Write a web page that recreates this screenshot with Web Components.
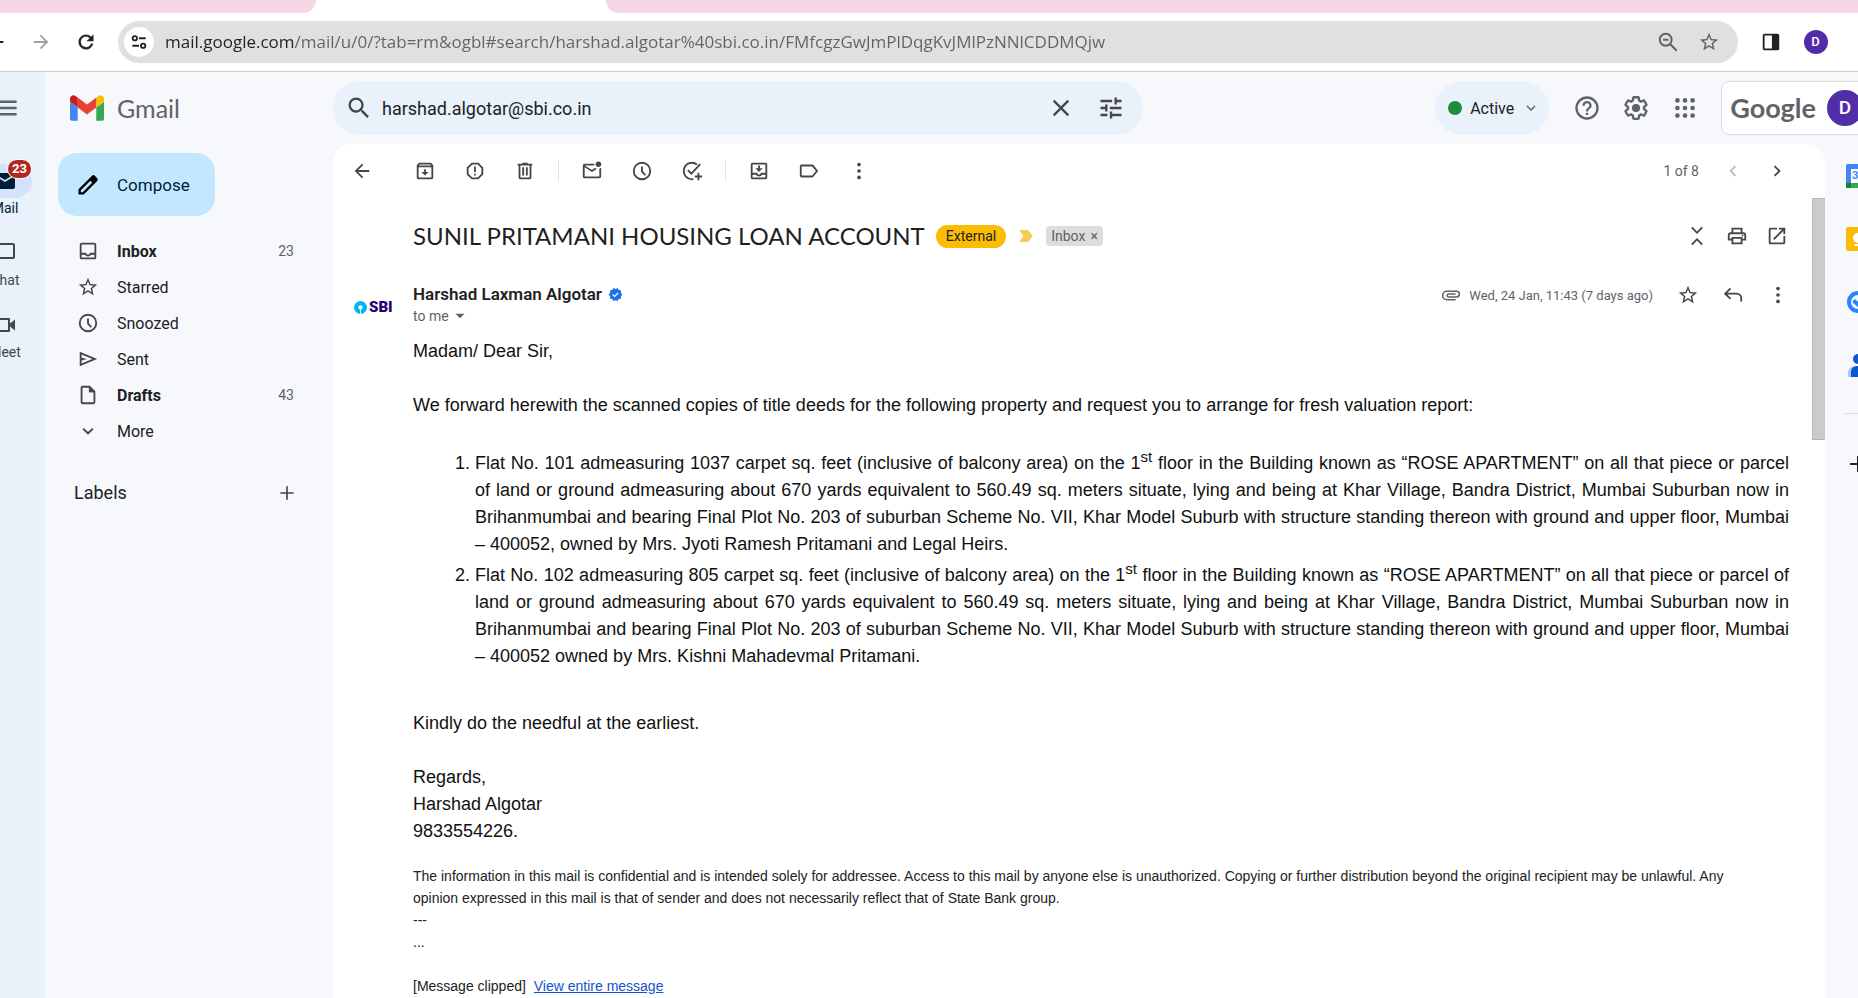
<!DOCTYPE html>
<html lang="en">
<head>
<meta charset="utf-8">
<title>SUNIL PRITAMANI HOUSING LOAN ACCOUNT - Gmail</title>
<style>
  body {
    margin: 0;
    height: 100vh;
    overflow: hidden;
    display: flex;
    flex-direction: column;
    background: #f6f8fc;
    color: #202124;
    font-family: Roboto, "Liberation Sans", sans-serif;
    font-size: 16px;
  }
</style>
</head>
<body>
<browser-bar></browser-bar>
<mail-app>
  <app-rail slot="rail"></app-rail>
  <mail-header slot="header"></mail-header>
  <side-nav slot="nav"></side-nav>
  <mail-thread slot="thread" heading="SUNIL PRITAMANI HOUSING LOAN ACCOUNT">
    <mail-message sender="Harshad Laxman Algotar" date="Wed, 24 Jan, 11:43 (7 days ago)"></mail-message>
  </mail-thread>
  <side-panel slot="panel"></side-panel>
</mail-app>

<script>
const ICONS = {
  back: '<path d="M20 11H7.8l5.6-5.6L12 4l-8 8 8 8 1.4-1.4L7.8 13H20z"/>',
  forward: '<path d="M4 13h12.2l-5.6 5.6L12 20l8-8-8-8-1.4 1.4 5.6 5.6H4z"/>',
  reload: '<path d="M17.65 6.35A7.96 7.96 0 0 0 12 4a8 8 0 1 0 7.73 10h-2.3A5.8 5.8 0 1 1 12 6.1c1.63 0 3.1.7 4.15 1.75L12.9 11H20V4z" stroke="currentColor" stroke-width=".4"/>',
  site: '<g fill="none" stroke="currentColor" stroke-width="2.2"><circle cx="7" cy="7.5" r="2.6"/><circle cx="17" cy="16.5" r="2.6"/><path d="M12 7.5h8M4 16.5h8"/></g>',
  zoomOut: '<g fill="none" stroke="currentColor" stroke-width="2.2"><circle cx="9.5" cy="9.5" r="6.5"/><path d="M14 14l7.5 7.5M6.500 9.500h6"/></g>',
  star: '<path d="M22 9.24l-7.19-.62L12 2 9.19 8.63 2 9.24l5.46 4.73L5.82 21 12 17.27 18.18 21l-1.63-7.03zM12 15.4l-3.76 2.27 1-4.28-3.32-2.88 4.38-.38L12 6.1l1.71 4.04 4.38.38-3.32 2.88 1 4.28z"/>',
  panel: '<path d="M19 3H5a2 2 0 0 0-2 2v14c0 1.1.9 2 2 2h14a2 2 0 0 0 2-2V5a2 2 0 0 0-2-2zM5 19V5h8v14z"/>',
  menu: '<path d="M2 18.5h20v-2.2H2zm0-5.4h20v-2.2H2zM2 5.5v2.2h20V5.500z"/>',
  mailFill: '<path d="M20 4H4a2 2 0 0 0-2 2v12c0 1.1.9 2 2 2h16a2 2 0 0 0 2-2V6a2 2 0 0 0-2-2zm0 4l-8 5-8-5V6l8 5 8-5z"/>',
  chat: '<path d="M20 2H4a2 2 0 0 0-2 2v18l4-4h14a2 2 0 0 0 2-2V4a2 2 0 0 0-2-2zm0 14H5.17L4 17.17V4h16z"/>',
  meet: '<path d="M17 10.5V6a1 1 0 0 0-1-1H6L2 9v9a1 1 0 0 0 1 1h13a1 1 0 0 0 1-1v-4.5l5 4v-11zM15 17H4V9.800L6.800 7H15z"/>',
  search: '<path d="M15.5 14h-.79l-.28-.27A6.47 6.47 0 0 0 16 9.5 6.5 6.5 0 1 0 9.5 16c1.61 0 3.09-.59 4.23-1.57l.27.28v.79l5 4.99L20.49 19zm-6 0a4.5 4.5 0 1 1 0-9 4.5 4.5 0 0 1 0 9z"/>',
  close: '<path d="M19 6.41L17.59 5 12 10.59 6.41 5 5 6.41 10.59 12 5 17.59 6.41 19 12 13.41 17.59 19 19 17.59 13.41 12z"/>',
  tune: '<path d="M3 17v2h6v-2zM3 5v2h10V5zm10 16v-2h8v-2h-8v-2h-2v6zM7 9v2H3v2h4v2h2V9zm14 4v-2H11v2zm-6-4h2V7h4V5h-4V3h-2z"/>',
  down: '<path d="M7.4 8.6L12 13.2l4.6-4.6L18 10l-6 6-6-6z"/>',
  help: '<path d="M11 18h2v-2h-2zm1-16a10 10 0 1 0 0 20 10 10 0 0 0 0-20zm0 18a8 8 0 1 1 0-16 8 8 0 0 1 0 16zm0-14a4 4 0 0 0-4 4h2a2 2 0 1 1 4 0c0 2-3 1.75-3 5h2c0-2.25 3-2.5 3-5a4 4 0 0 0-4-4z"/>',
  gear: '<path d="M13.85 22.25h-3.7c-.74 0-1.36-.54-1.45-1.27l-.27-1.89c-.27-.14-.53-.29-.79-.46l-1.8.72c-.7.26-1.47-.03-1.81-.65L2.2 15.53c-.35-.66-.2-1.44.36-1.88l1.53-1.19c-.01-.15-.02-.3-.02-.46 0-.15.01-.31.02-.46l-1.52-1.19c-.59-.45-.74-1.26-.37-1.88l1.85-3.19c.34-.62 1.11-.9 1.79-.63l1.81.73c.26-.17.52-.32.78-.46l.27-1.91c.09-.7.71-1.25 1.44-1.25h3.7c.74 0 1.36.54 1.45 1.27l.27 1.89c.27.14.53.29.79.46l1.8-.72c.71-.26 1.48.03 1.82.65l1.84 3.18c.36.66.2 1.44-.36 1.88l-1.52 1.19c.01.15.02.3.02.46s-.01.31-.02.46l1.52 1.19c.56.45.72 1.23.37 1.86l-1.86 3.22c-.34.62-1.11.9-1.8.63l-1.8-.72c-.26.17-.52.32-.78.46l-.27 1.91c-.1.68-.72 1.22-1.46 1.22zm-3.23-2h2.76l.37-2.55.53-.22c.44-.18.88-.44 1.34-.78l.45-.34 2.38.96 1.38-2.4-2.03-1.58.07-.56c.03-.26.06-.51.06-.78s-.03-.53-.06-.78l-.07-.56 2.03-1.58-1.39-2.4-2.39.96-.45-.35c-.42-.32-.87-.58-1.33-.77l-.52-.22-.37-2.55h-2.76l-.37 2.55-.53.21c-.44.19-.88.44-1.34.79l-.45.33-2.38-.95-1.39 2.39 2.03 1.58-.07.56a7 7 0 0 0-.06.79c0 .26.02.53.06.78l.07.56-2.03 1.58 1.38 2.4 2.39-.96.45.35c.43.33.86.58 1.33.77l.53.22z"/><circle cx="12" cy="12" r="3.5"/>',
  apps: '<circle cx="5.5" cy="5.5" r="2"/><circle cx="12" cy="5.5" r="2"/><circle cx="18.5" cy="5.5" r="2"/><circle cx="5.5" cy="12" r="2"/><circle cx="12" cy="12" r="2"/><circle cx="18.5" cy="12" r="2"/><circle cx="5.5" cy="18.5" r="2"/><circle cx="12" cy="18.5" r="2"/><circle cx="18.5" cy="18.5" r="2"/>',
  pencil: '<path d="M21.2 5.2l-2.400-2.400a2 2 0 0 0-2.800 0L2.500 16.300v5.200h5.200L21.200 8a2 2 0 0 0 0-2.800zM6.700 19.200H4.800v-1.900l9.500-9.500 1.900 1.900z"/>',
  inbox: '<path d="M19 3H5a2 2 0 0 0-2 2v14c0 1.1.9 2 2 2h14a2 2 0 0 0 2-2V5a2 2 0 0 0-2-2zm0 16H5v-3h3.56a4 4 0 0 0 6.88 0H19zm0-5h-4.99a2 2 0 0 1-4.02 0H5V5h14z"/>',
  clock: '<path d="M12 2a10 10 0 1 0 0 20 10 10 0 0 0 0-20zm0 18a8 8 0 1 1 0-16 8 8 0 0 1 0 16zm1-13h-2v6l4 4.2 1.4-1.4-3.400-3.400z"/>',
  send: '<path d="M3 4v16l19-8zm2 3l11.85 5L5 17v-3.5l6-1.5-6-1.5z"/>',
  draft: '<path d="M14 2H6a2 2 0 0 0-2 2v16c0 1.1.9 2 2 2h12a2 2 0 0 0 2-2V8zM6 20V4h7v5h5v11z"/><path d="M13 3v6h6z"/>',
  plus: '<path d="M20 13h-7v7h-2v-7H4v-2h7V4h2v7h7z"/>',
  archive: '<path d="M20.54 5.23l-1.39-1.68A1.45 1.45 0 0 0 18 3H6c-.47 0-.88.21-1.16.55L3.46 5.23A1.98 1.98 0 0 0 3 6.5V19c0 1.1.9 2 2 2h14a2 2 0 0 0 2-2V6.500c0-.48-.17-.93-.46-1.27zM6.24 5h11.52l.83 1H5.42zM5 19V8h14v11zm8-9h-2v3H8l4 4 4-4h-3z"/>',
  spam: '<path d="M15.73 3H8.27L3 8.27v7.46L8.27 21h7.46L21 15.73V8.27zM19 14.9L14.9 19H9.1L5 14.9V9.1L9.1 5h5.8L19 9.100z"/><path d="M11 7h2v6h-2zM11 15h2v2h-2z"/>',
  trash: '<path d="M15 4V3H9v1H4v2h1v13c0 1.1.9 2 2 2h10a2 2 0 0 0 2-2V6h1V4zm2 15H7V6h10z"/><path d="M9 8h2v9H9zM13 8h2v9h-2z"/>',
  unread: '<path d="M20 9.5V18H4V8l8 5 5.2-3.2a4.500 4.500 0 0 1-1.700-1.300L12 11 4 6h10.500c-.1-.7 0-1.400.2-2H4a2 2 0 0 0-2 2v12c0 1.100.9 2 2 2h16a2 2 0 0 0 2-2V8.500z"/><circle cx="19" cy="4.500" r="3"/>',
  task: '<path d="M20.200 9.400l1.600-1.600A10 10 0 1 0 14 21.800v-2.100A8 8 0 1 1 12 4c1.600 0 3.100.5 4.300 1.300L10.600 11.200 8.400 9 7 10.400l3.600 3.600L22 4.500 20.600 3.100z" fill="none"/><path fill="none" stroke="currentColor" stroke-width="2" d="M17.500 4.900A9 9 0 1 0 13.500 20.900M7.500 11l3.800 3.800L21 4.500"/><path d="M20 14h-2v3h-3v2h3v3h2v-3h3v-2h-3z"/>',
  moveTo: '<path d="M19 3H5a2 2 0 0 0-2 2v14c0 1.1.9 2 2 2h14a2 2 0 0 0 2-2V5a2 2 0 0 0-2-2zM5 19v-3h3.56a4 4 0 0 0 6.88 0H19v3zm0-5V5h14v9h-5a2 2 0 0 1-4 0z"/><path d="M16 9h-3V6h-2v3H8l4 4z"/>',
  label: '<path d="M17 5.5A2 2 0 0 0 15.5 5H4a2 2 0 0 0-2 2v10c0 1.1.9 2 2 2h11.5c.7 0 1.2-.3 1.6-.9L22 12zM15.5 17H4V7h11.5l4 5z"/>',
  more: '<circle cx="12" cy="5" r="2"/><circle cx="12" cy="12" r="2"/><circle cx="12" cy="19" r="2"/>',
  left: '<path d="M15.4 7.4L14 6l-6 6 6 6 1.4-1.4L10.8 12z"/>',
  right: '<path d="M8.6 16.6L10 18l6-6-6-6-1.4 1.4 4.6 4.6z"/>',
  collapse: '<path d="M18.5 3.4L17 2l-5 5-5-5-1.5 1.4L12 9.9zM5.500 20.600L7 22l5-5 5 5 1.500-1.400-6.500-6.500z"/>',
  print: '<path d="M19 8h-1V3H6v5H5a3 3 0 0 0-3 3v6h4v4h12v-4h4v-6a3 3 0 0 0-3-3zM8 5h8v3H8zm8 14H8v-4h8zm2-4v-2H6v2H4v-4a1 1 0 0 1 1-1h14a1 1 0 0 1 1 1v4z"/><circle cx="18" cy="11.5" r="1"/>',
  open: '<path d="M19 19H5V5h7V3H5a2 2 0 0 0-2 2v14c0 1.1.9 2 2 2h14a2 2 0 0 0 2-2v-7h-2zM14 3v2h3.59l-9.83 9.83 1.41 1.41L19 6.41V10h2V3z"/>',
  reply: '<path d="M10 5.4L8.6 4 2 10.5 8.600 17l1.400-1.400-4.200-4.100H16a4 4 0 0 1 4 4V19h2v-3.500a6 6 0 0 0-6-6H5.800z"/>',
  clip: '<path d="M7.5 18a5.5 5.5 0 0 1 0-11H18a4 4 0 0 1 0 8H9.5a2.5 2.5 0 0 1 0-5H17v1.7H9.5a.8.8 0 0 0 0 1.600H18a2.300 2.300 0 0 0 0-4.600H7.500a3.800 3.800 0 0 0 0 7.600H17V18z"/>',
  arrow: '<path d="M6 9l6 6 6-6z"/>',
  verified: '<path fill="#1a73e8" d="M23 12l-2.44-2.78.34-3.68-3.61-.82L15.4 1.54 12 3 8.6 1.54 6.71 4.72l-3.61.81.34 3.68L1 12l2.44 2.78-.34 3.69 3.61.82 1.89 3.18L12 21l3.4 1.46 1.89-3.18 3.61-.82-.34-3.68z"/><path fill="none" stroke="#fff" stroke-width="2" d="M7.5 12l3.2 3 5.5-5.5"/>',
  important: '<path fill="#f7cb4d" d="M3 4h11.500l6.500 8-6.500 8H3l5.500-8z"/>',
  sbi: '<circle cx="12" cy="12" r="12" fill="#00b5ef"/><circle cx="12" cy="12" r="4" fill="#fff"/><path fill="#fff" d="M11 12h2v12h-2z"/>',
  calendar: '<path fill="#4285f4" d="M0 2a2 2 0 0 1 2-2h22v5H5v19H0z"/><path fill="#fff" d="M5 5h19v14H5z"/><path fill="#34a853" d="M5 19h19v5H5z"/><path fill="#188038" d="M0 19h5v5H2a2 2 0 0 1-2-2z"/>',
  keep: '<rect width="24" height="24" rx="2" fill="#fbbc04"/><circle cx="12" cy="11" r="5" fill="#fff"/><path fill="#fff" d="M8.5 17h7v2h-7z"/>',
  tasks: '<circle cx="12" cy="12" r="9" fill="none" stroke="#2684fc" stroke-width="4"/><path fill="none" stroke="#2684fc" stroke-width="4" d="M7.500 10.500l4.500 4L22 4"/>',
  contacts: '<circle cx="12" cy="6" r="5" fill="#0b57d0"/><path fill="#a8c7fa" d="M2 24v-4c0-4 3-7 7-7h2v11z"/><path fill="#0b57d0" d="M5 24v-5c0-4 3-6 7-6s7 2 7 6v5z"/>'
};

// Base class: each element renders its own markup into an open shadow root.
class BaseElement extends HTMLElement {
  connectedCallback() {
    if (this.shadowRoot) return;
    this.attachShadow({ mode: "open" });
    this.shadowRoot.innerHTML = `
      <style>
        * { box-sizing: border-box; }
        button, input {
          margin: 0;
          padding: 0;
          border: none;
          background: none;
          color: inherit;
          font: inherit;
        }
        button { cursor: pointer; }
        :host { display: block; }
      </style>
      ${this.render()}
    `;
  }
}

class MailIcon extends BaseElement {
  render() {
    return `
      <style>
        :host {
          display: inline-flex;
          flex: none;
          width: var(--icon-size, 22px);
          height: var(--icon-size, 22px);
        }
        svg { width: 100%; height: 100%; display: block; }
      </style>
      <svg viewBox="0 0 24 24" fill="currentColor" aria-hidden="true">${ICONS[this.getAttribute("name")]}</svg>
    `;
  }
}

class IconButton extends BaseElement {
  render() {
    const name = this.getAttribute("icon");
    return `
      <style>
        :host {
          flex: none;
          width: var(--button-width, 40px);
          height: 40px;
        }
        button {
          width: 100%;
          height: 100%;
          display: flex;
          align-items: center;
          justify-content: center;
        }
      </style>
      <button type="button" aria-label="${this.getAttribute("label")}"><mail-icon name="${name}"></mail-icon></button>
    `;
  }
}

class UserAvatar extends BaseElement {
  render() {
    return `
      <style>
        :host {
          flex: none;
          width: var(--avatar-size, 24px);
          height: var(--avatar-size, 24px);
        }
        button {
          width: 100%;
          height: 100%;
          border-radius: 50%;
          background: #512da8;
          color: #fff;
          text-align: center;
        }
      </style>
      <button type="button"><slot></slot></button>
    `;
  }
}

class BrowserBar extends BaseElement {
  render() {
    return `
      <style>
        :host { flex: none; background: #fff; border-bottom: 1px solid #c9cccb; overflow: hidden; }
        .tabs { height: 13px; display: flex; justify-content: space-between; }
        .tab { background: #f6d5e4; }
        .tab.before { width: 17%; border-bottom-right-radius: 13px; }
        .tab.after { width: 67.4%; border-bottom-left-radius: 13px; }
        .bar { height: 58px; display: flex; align-items: center; padding-right: 20px; margin-left: -27px; }
        .nav { --button-width: 45px; --icon-size: 22px; color: #202124; }
        .nav.off { color: #a0a0a0; }
        .omnibox {
          flex: 1;
          min-width: 0;
          height: 42px;
          margin: 0 10px;
          padding: 0 9px 0 6px;
          border-radius: 21px;
          background: #e0e0e0;
          display: flex;
          align-items: center;
          color: #5f6368;
          --button-width: 41px;
        }
        .site {
          width: 30px;
          height: 30px;
          border-radius: 50%;
          background: #fff;
          color: #202124;
          display: flex;
          align-items: center;
          justify-content: center;
          --icon-size: 20px;
        }
        input {
          flex: 1;
          min-width: 0;
          height: 30px;
          margin-left: 11px;
          font: 17px/30px "Open Sans", sans-serif;
          outline: none;
          color: transparent;
          background: linear-gradient(90deg, #202124 129px, #5f6368 129px);
          -webkit-background-clip: text;
          background-clip: text;
        }
        .user { width: 45px; display: flex; justify-content: center; font: 500 13px/24px Roboto, sans-serif; }
      </style>
      <div class="tabs"><div class="tab before"></div><div class="tab after"></div></div>
      <div class="bar">
        <icon-button class="nav" icon="back" label="Back"></icon-button>
        <icon-button class="nav off" icon="forward" label="Forward"></icon-button>
        <icon-button class="nav" icon="reload" label="Reload"></icon-button>
        <div class="omnibox">
          <button type="button" class="site" aria-label="Site information"><mail-icon name="site"></mail-icon></button>
          <input type="text" aria-label="Address" value="mail.google.com/mail/u/0/?tab=rm&amp;ogbl#search/harshad.algotar%40sbi.co.in/FMfcgzGwJmPlDqgKvJMlPzNNlCDDMQjw">
          <icon-button icon="zoomOut" label="Zoom"></icon-button>
          <icon-button icon="star" label="Bookmark"></icon-button>
        </div>
        <icon-button class="nav" icon="panel" label="Side panel"></icon-button>
        <div class="user"><user-avatar>D</user-avatar></div>
      </div>
    `;
  }
}

class MailApp extends BaseElement {
  render() {
    return `
      <style>
        :host { flex: 1; min-height: 0; display: flex; }
        .main { flex: 1; min-width: 0; display: flex; flex-direction: column; overflow: hidden; }
        .content { flex: 1; min-height: 0; display: flex; }
        slot[name="thread"]::slotted(*) { flex: 1; min-width: 0; }
      </style>
      <slot name="rail"></slot>
      <div class="main">
        <slot name="header"></slot>
        <div class="content">
          <slot name="nav"></slot>
          <slot name="thread"></slot>
          <slot name="panel"></slot>
        </div>
      </div>
    `;
  }
}

class AppRail extends BaseElement {
  render() {
    return `
      <style>
        :host {
          flex: none;
          width: 45px;
          display: flex;
          justify-content: flex-end;
          overflow: hidden;
          background: #e9f1fb;
          color: #444746;
        }
        nav { flex: none; width: 80px; display: flex; flex-direction: column; align-items: center; }
        .menu { height: 72px; display: flex; align-items: center; margin-bottom: 20px; --icon-size: 28px; color: #5f6368; }
        a {
          height: 72px;
          display: flex;
          flex-direction: column;
          align-items: center;
          color: inherit;
          text-decoration: none;
          font-size: 14px;
          line-height: 20px;
          --icon-size: 24px;
        }
        .pill {
          position: relative;
          width: 54px;
          height: 34px;
          border-radius: 17px;
          display: flex;
          align-items: center;
          justify-content: center;
        }
        .active { color: #001d35; }
        .active .pill { background: #d3e3fd; }
        .badge {
          position: absolute;
          top: -5px;
          right: 0;
          padding: 0 4px;
          border: 1px solid #fff;
          border-radius: 10px;
          background: #b3261e;
          color: #fff;
          font-size: 13px;
          font-weight: 700;
          line-height: 18px;
        }
      </style>
      <nav>
        <div class="menu"><icon-button icon="menu" label="Main menu"></icon-button></div>
        <a href="#mail" class="active"><span class="pill"><mail-icon name="mailFill"></mail-icon><span class="badge">23</span></span>Mail</a>
        <a href="#chat"><span class="pill"><mail-icon name="chat"></mail-icon></span>Chat</a>
        <a href="#meet"><span class="pill"><mail-icon name="meet"></mail-icon></span>Meet</a>
      </nav>
    `;
  }
}

class MailHeader extends BaseElement {
  render() {
    return `
      <style>
        :host { flex: none; height: 72px; display: flex; align-items: center; color: #5f6368; --icon-size: 28px; }
        .logo {
          flex: none;
          width: 288px;
          padding-left: 25px;
          display: flex;
          align-items: center;
          gap: 13px;
          color: #5f6368;
          font: 25px/32px Lato, sans-serif;
          text-decoration: none;
        }
        .logo svg { width: 34px; height: 26px; }
        form {
          flex: 0 1 810px;
          min-width: 0;
          height: 54px;
          padding: 0 7px 0 2px;
          border-radius: 27px;
          background: #e9f1fb;
          display: flex;
          align-items: center;
          color: #444746;
          --button-width: 50px;
        }
        .find { --button-width: 47px; }
        input { flex: 1; min-width: 0; color: #202124; font-size: 18px; outline: none; }
        .right { flex: none; display: flex; align-items: center; margin-left: auto; margin-right: -14px; }
        .status {
          height: 54px;
          padding: 0 9px 0 13px;
          border-radius: 27px;
          background: #e9f1fb;
          display: flex;
          align-items: center;
          gap: 8px;
          color: #202124;
          --icon-size: 18px;
        }
        .status mail-icon { color: #5f6368; }
        .dot { width: 14px; height: 14px; border-radius: 50%; background: #1e8e3e; }
        .icons { display: flex; margin: 0 12px 0 13px; --button-width: 49px; }
        .account {
          height: 54px;
          padding: 0 8px;
          border: 1px solid #dadce0;
          border-radius: 8px;
          background: #fff;
          display: flex;
          align-items: center;
          gap: 11px;
          font: 700 27px/36px Lato, sans-serif;
          --avatar-size: 36px;
        }
        user-avatar { font: 500 19px/36px Roboto, sans-serif; }
      </style>
      <a class="logo" href="#inbox">
        <svg viewBox="52 42 88 66" aria-hidden="true">
          <path fill="#4285f4" d="M58 108h14V74L52 59v43c0 3.32 2.69 6 6 6"/>
          <path fill="#34a853" d="M120 108h14c3.32 0 6-2.69 6-6V59l-20 15"/>
          <path fill="#fbbc04" d="M120 48v26l20-15v-8c0-7.42-8.47-11.65-14.4-7.2"/>
          <path fill="#ea4335" d="M72 74V48l24 18 24-18v26L96 92"/>
          <path fill="#c5221f" d="M52 51v8l20 15V48l-5.6-4.2c-5.94-4.45-14.4-.22-14.4 7.2"/>
        </svg>
        <span>Gmail</span>
      </a>
      <form role="search">
        <icon-button class="find" icon="search" label="Search"></icon-button>
        <input type="text" aria-label="Search mail" value="harshad.algotar@sbi.co.in">
        <icon-button icon="close" label="Clear search"></icon-button>
        <icon-button icon="tune" label="Search options"></icon-button>
      </form>
      <div class="right">
        <button type="button" class="status"><span class="dot"></span><span>Active</span><mail-icon name="down"></mail-icon></button>
        <div class="icons">
          <icon-button icon="help" label="Support"></icon-button>
          <icon-button icon="gear" label="Settings"></icon-button>
          <icon-button icon="apps" label="Google apps"></icon-button>
        </div>
        <div class="account"><span>Google</span><user-avatar>D</user-avatar></div>
      </div>
    `;
  }
}

class NavItem extends BaseElement {
  render() {
    const count = this.getAttribute("count");
    return `
      <style>
        a {
          height: 36px;
          padding: 0 39px 0 32px;
          display: flex;
          align-items: center;
          gap: 18px;
          color: #202124;
          text-decoration: none;
        }
        mail-icon { color: #444746; }
        .name { flex: 1; }
        :host([unread]) .name { font-weight: 700; }
        .count { color: #5f6368; font-size: 14px; }
      </style>
      <a href="#">
        <mail-icon name="${this.getAttribute("icon")}"></mail-icon>
        <span class="name"><slot></slot></span>
        ${count ? `<span class="count">${count}</span>` : ""}
      </a>
    `;
  }
}

class SideNav extends BaseElement {
  render() {
    return `
      <style>
        :host { flex: none; width: 288px; }
        .compose {
          height: 63px;
          margin: 9px 13px 17px;
          padding: 0 25px 0 18px;
          border-radius: 19px;
          background: #c2e7ff;
          color: #001d35;
          display: flex;
          align-items: center;
          gap: 17px;
          font-size: 17px;
          --icon-size: 24px;
        }
        .compose mail-icon { color: #000; }
        .labels {
          margin-top: 24px;
          padding: 0 26px 0 29px;
          display: flex;
          align-items: center;
          justify-content: space-between;
          --icon-size: 20px;
        }
        .labels icon-button { color: #444746; }
        h2 { margin: 0; font-size: 18px; font-weight: 400; line-height: 36px; }
      </style>
      <button type="button" class="compose"><mail-icon name="pencil"></mail-icon><span>Compose</span></button>
      <nav>
        <nav-item icon="inbox" count="23" unread>Inbox</nav-item>
        <nav-item icon="star">Starred</nav-item>
        <nav-item icon="clock">Snoozed</nav-item>
        <nav-item icon="send">Sent</nav-item>
        <nav-item icon="draft" count="43" unread>Drafts</nav-item>
        <nav-item icon="down">More</nav-item>
      </nav>
      <div class="labels"><h2>Labels</h2><icon-button icon="plus" label="Create new label"></icon-button></div>
    `;
  }
}

class MailThread extends BaseElement {
  render() {
    return `
      <style>
        :host {
          display: flex;
          flex-direction: column;
          min-height: 0;
          overflow: hidden;
          border-radius: 19px 19px 0 0;
          background: #fff;
          color: #444746;
        }
        .toolbar { flex: none; height: 54px; padding: 0 26px 0 4px; display: flex; align-items: center; --button-width: 50px; }
        .return { margin-right: 13px; }
        .rule { width: 1px; height: 22px; margin: 0 8px; background: #e3e5e8; }
        .pager { margin-left: auto; display: flex; align-items: center; font-size: 14px; color: #5f6368; --button-width: 44px; }
        .pager span { margin-right: 12px; }
        .off { color: #b9bbbd; }
        .next { color: #444746; }
        .scroll { flex: 1; min-height: 0; display: flex; }
        .thread { flex: 1; min-width: 0; overflow: hidden; }
        .track { flex: none; width: 13px; }
        .thumb { height: 30.2%; background: #cbcbcb; border: 1px solid #b5b5b5; border-right: none; }
        .subject { height: 76px; padding: 0 15px 0 80px; display: flex; align-items: center; }
        h1 { margin: 0 11px 0 0; color: #1f1f1f; font: 24px/32px Lato, sans-serif; }
        .external { padding: 0 10px; border-radius: 12px; background: #fbbc04; color: #202124; font-size: 14px; line-height: 23px; }
        .mark { margin: 0 11px; --icon-size: 18px; }
        .tag {
          padding: 0 5px;
          border-radius: 4px;
          background: #ddd;
          color: #5f6368;
          display: flex;
          align-items: center;
          gap: 5px;
          font-size: 14px;
          line-height: 20px;
        }
        .tag button { line-height: 20px; }
        .actions { margin-left: auto; display: flex; }
      </style>
      <div class="toolbar">
        <icon-button class="return" icon="back" label="Back to search results"></icon-button>
        <icon-button icon="archive" label="Archive"></icon-button>
        <icon-button icon="spam" label="Report spam"></icon-button>
        <icon-button icon="trash" label="Delete"></icon-button>
        <span class="rule"></span>
        <icon-button icon="unread" label="Mark as unread"></icon-button>
        <icon-button icon="clock" label="Snooze"></icon-button>
        <icon-button icon="task" label="Add to Tasks"></icon-button>
        <span class="rule"></span>
        <icon-button icon="moveTo" label="Move to"></icon-button>
        <icon-button icon="label" label="Labels"></icon-button>
        <icon-button icon="more" label="More"></icon-button>
        <div class="pager">
          <span>1 of 8</span>
          <icon-button class="off" icon="left" label="Newer"></icon-button>
          <icon-button class="next" icon="right" label="Older"></icon-button>
        </div>
      </div>
      <div class="scroll">
        <div class="thread">
          <div class="subject">
            <h1>${this.getAttribute("heading")}</h1>
            <span class="external">External</span>
            <mail-icon class="mark" name="important"></mail-icon>
            <span class="tag">Inbox <button type="button" aria-label="Remove label Inbox">×</button></span>
            <div class="actions">
              <icon-button icon="collapse" label="Collapse all"></icon-button>
              <icon-button icon="print" label="Print all"></icon-button>
              <icon-button icon="open" label="In new window"></icon-button>
            </div>
          </div>
          <slot></slot>
        </div>
        <div class="track"><div class="thumb"></div></div>
      </div>
    `;
  }
}

class MailMessage extends BaseElement {
  render() {
    return `
      <style>
        :host { display: grid; grid-template-columns: 80px 1fr; padding-top: 8px; }
        .brand {
          height: 50px;
          padding-left: 21px;
          display: flex;
          align-items: center;
          gap: 2px;
          color: #280071;
          font-size: 15px;
          font-weight: 900;
          --icon-size: 13px;
        }
        header { display: flex; padding-right: 12px; color: #5f6368; margin-bottom: 12px; }
        .name {
          display: flex;
          align-items: center;
          gap: 6px;
          color: #202124;
          font-size: 17px;
          font-weight: 600;
          line-height: 24px;
          --icon-size: 15px;
        }
        .to { display: flex; align-items: center; gap: 2px; font-size: 14px; line-height: 20px; --icon-size: 18px; }
        .meta {
          height: 26px;
          margin-left: auto;
          display: flex;
          align-items: center;
          font-size: 13px;
          --button-width: 45px;
        }
        .meta mail-icon { margin-right: 7px; }
        .meta .date { margin-right: 12px; }
        .meta icon-button { color: #444746; }
        .body {
          grid-column: 2;
          padding-right: 23px;
          color: #111;
          font: 18px/27px "Liberation Sans", Arial, sans-serif;
        }
        p { margin: 0 0 27px; }
        ol { margin: 27px 0 40px; padding-left: 62px; text-align: justify; }
        sup { line-height: 22px; }
        .notice { margin: 0; color: #222; font-size: 14px; line-height: 22px; }
        .clipped { margin: 22px 0 0; }
        .body p:has(+ .notice) { margin-bottom: 20px; }
        a { margin-left: 4px; color: #1155cc; }
      </style>
      <div class="brand"><mail-icon name="sbi"></mail-icon><span>SBI</span></div>
      <header>
        <div>
          <div class="name"><span>${this.getAttribute("sender")}</span><mail-icon name="verified"></mail-icon></div>
          <div class="to"><span>to me</span><mail-icon name="arrow"></mail-icon></div>
        </div>
        <div class="meta">
          <mail-icon name="clip"></mail-icon>
          <span class="date">${this.getAttribute("date")}</span>
          <icon-button icon="star" label="Star"></icon-button>
          <icon-button icon="reply" label="Reply"></icon-button>
          <icon-button icon="more" label="More"></icon-button>
        </div>
      </header>
      <div class="body">
        <p>Madam/ Dear Sir,</p>
        <p>We forward herewith the scanned copies of title deeds for the following property and request you to arrange for fresh valuation report:</p>
        <ol>
          <li>Flat No. 101 admeasuring 1037 carpet sq. feet (inclusive of balcony area) on the 1<sup>st</sup> floor in the Building known as “ROSE APARTMENT” on all that piece or parcel of&nbsp;land or ground admeasuring about 670 yards equivalent to 560.49 sq. meters situate, lying and being at Khar Village, Bandra District, Mumbai Suburban now in Brihanmumbai and bearing Final Plot No. 203 of suburban Scheme No. VII, Khar Model Suburb with structure standing thereon with ground and upper floor, Mumbai – 400052, owned by Mrs. Jyoti Ramesh Pritamani and Legal Heirs.</li>
          <li>Flat No. 102 admeasuring 805 carpet sq. feet (inclusive of balcony area) on the 1<sup>st</sup> floor in the Building known as “ROSE APARTMENT” on all that piece or parcel of land or ground admeasuring about 670 yards equivalent to 560.49 sq. meters situate, lying and being at Khar Village, Bandra District, Mumbai Suburban now in Brihanmumbai and bearing Final Plot No. 203 of suburban Scheme No. VII, Khar Model Suburb with structure standing thereon with ground and upper floor, Mumbai – 400052 owned by Mrs. Kishni Mahadevmal Pritamani.</li>
        </ol>
        <p>Kindly do the needful at the earliest.</p>
        <p>Regards,<br>Harshad Algotar<br>9833554226.</p>
        <p class="notice">The information in this mail is confidential and is intended solely for addressee. Access to this mail by anyone else is unauthorized. Copying or further distribution beyond the original recipient may be unlawful. Any<br>opinion expressed in this mail is that of sender and does not necessarily reflect that of State Bank group.<br>---<br>...</p>
        <p class="notice clipped">[Message clipped] <a href="#full">View entire message</a></p>
      </div>
    `;
  }
}

class SidePanel extends BaseElement {
  render() {
    return `
      <style>
        :host { flex: none; width: 33px; overflow: hidden; color: #202124; --button-width: 66px; --icon-size: 24px; }
        nav { width: 66px; }
        .app { position: relative; height: 63px; display: flex; align-items: center; }
        .day {
          position: absolute;
          left: 27px;
          color: #4285f4;
          font-size: 11px;
          font-weight: 700;
        }
        hr { margin: 17px 20px 18px; border: none; border-top: 1px solid #dadce0; }
      </style>
      <nav>
        <div class="app"><icon-button icon="calendar" label="Calendar"></icon-button><span class="day">31</span></div>
        <div class="app"><icon-button icon="keep" label="Keep"></icon-button></div>
        <div class="app"><icon-button icon="tasks" label="Tasks"></icon-button></div>
        <div class="app"><icon-button icon="contacts" label="Contacts"></icon-button></div>
        <hr>
        <div class="app"><icon-button icon="plus" label="Get add-ons"></icon-button></div>
      </nav>
    `;
  }
}

customElements.define("mail-icon", MailIcon);
customElements.define("icon-button", IconButton);
customElements.define("user-avatar", UserAvatar);
customElements.define("browser-bar", BrowserBar);
customElements.define("mail-app", MailApp);
customElements.define("app-rail", AppRail);
customElements.define("mail-header", MailHeader);
customElements.define("nav-item", NavItem);
customElements.define("side-nav", SideNav);
customElements.define("mail-thread", MailThread);
customElements.define("mail-message", MailMessage);
customElements.define("side-panel", SidePanel);
</script>
</body>
</html>
